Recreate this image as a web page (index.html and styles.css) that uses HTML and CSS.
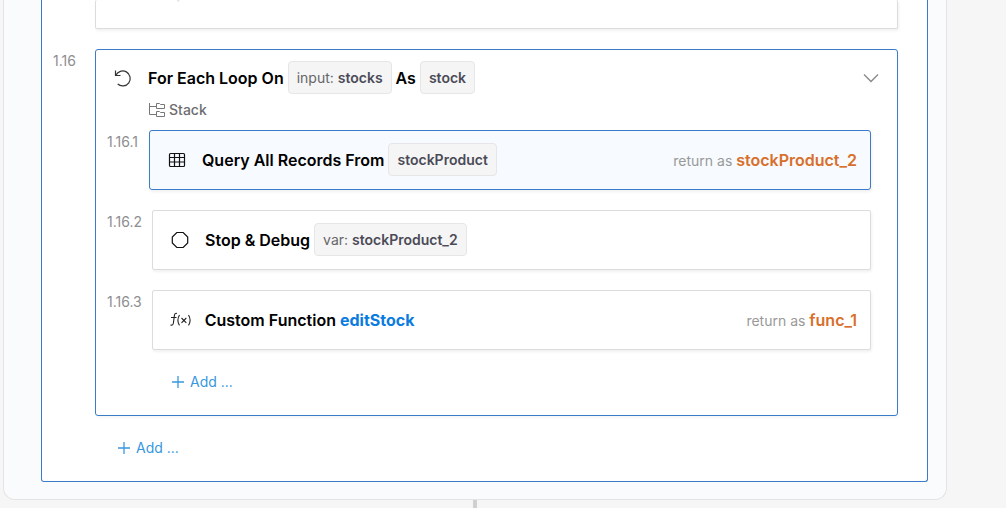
FILE: index.html
```
<!DOCTYPE html>
<html lang="en">
    <head>
        <meta charset="UTF-8" />
        <meta name="viewport" content="width=device-width,initial-scale=1" />
        <title>Function Stack</title>
        <link rel="stylesheet" href="styles.css">
    </head>
    <body>
        <main class="panel">
            <section class="group group-outer">
                <div class="step">
                    <span class="step-no"></span>
                    <div class="card card-prev">
                        <svg class="icon-tail" width="24" height="2" viewBox="0 0 24 2">
                            <path d="M11.5 0h2M11.5 1h1" stroke="#ccc" />
                        </svg>
                    </div>
                </div>
                <div class="step">
                    <span class="step-no">1.16</span>
                    <section class="group group-loop">
                        <header class="loop-head">
                            <svg class="icon" width="24" height="24" viewBox="0 0 24 24" fill="none" stroke="#333" stroke-width="1.2">
                                <path d="M4.5 4.5v5h5M4.8 9.5A7.5 7.5 0 1 1 6.7 18" />
                            </svg>
                            <h2 class="title">For Each Loop On</h2>
                            <span class="chip">input: <b>stocks</b></span>
                            <span class="title">As</span>
                            <span class="chip"><b>stock</b></span>
                            <button class="toggle" type="button" aria-label="Collapse loop">
                                <svg width="16" height="10" viewBox="0 0 16 10" fill="none" stroke="#888" stroke-width="1.3">
                                    <path d="M1 1.5l7 7 7-7" />
                                </svg>
                            </button>
                        </header>
                        <div class="stack-label">
                            <svg width="16" height="16" viewBox="0 0 16 16" fill="none" stroke="#777">
                                <path d="M.5 1v11.5H7M.5 4.5H7" />
                                <path d="M7.5 1.5h3l1 1h4v4h-8zM7.5 9.5h3l1 1h4v4h-8z" />
                            </svg>
                            Stack
                        </div>
                        <div class="step">
                            <span class="step-no">1.16.1</span>
                            <article class="card selected">
                                <svg class="icon" width="24" height="24" viewBox="0 0 24 24" fill="none" stroke="#111" stroke-width="1.2">
                                    <rect x="4.5" y="5.5" width="15" height="13" rx="1" />
                                    <path d="M4.5 9.5h15M4.5 14h15M9.5 5.5v13M14.5 5.5v13" />
                                </svg>
                                <h3 class="title">Query All Records From</h3>
                                <span class="chip"><b>stockProduct</b></span>
                                <span class="return">return as <b>stockProduct_2</b></span>
                            </article>
                        </div>
                        <div class="step">
                            <span class="step-no">1.16.2</span>
                            <article class="card">
                                <svg class="icon" width="24" height="24" viewBox="0 0 24 24" fill="none" stroke="#111" stroke-width="1.2">
                                    <path d="M8.8 4.5h6.4l4.5 4.5v6l-4.5 4.5H8.8L4.3 15V9z" />
                                </svg>
                                <h3 class="title">Stop &amp; Debug</h3>
                                <span class="chip">var: <b>stockProduct_2</b></span>
                            </article>
                        </div>
                        <div class="step">
                            <span class="step-no">1.16.3</span>
                            <article class="card">
                                <svg class="icon" width="24" height="24" viewBox="0 0 24 24" fill="none" stroke="#222" stroke-width="1.1">
                                    <path d="M9 5.5C7.4 4.9 6.6 5.7 6.4 7.5L5.4 15c-.2 1.8-1.2 2.5-2.9 2M3 9.5h5.5" />
                                    <path d="M11.5 7c-2 3.2-2 7.2 0 10.4M20.5 7c2 3.2 2 7.2 0 10.4M13.5 10l4.8 4.8M18.3 10l-4.8 4.8" />
                                </svg>
                                <h3 class="title">Custom Function <a class="fn-link" href="#editStock">editStock</a></h3>
                                <span class="return">return as <b>func_1</b></span>
                            </article>
                        </div>
                        <button class="add" type="button">
                            <svg width="12" height="12" viewBox="0 0 12 12" fill="none" stroke="currentColor" stroke-width="1.3">
                                <path d="M6 0v12M0 6h12" />
                            </svg>
                            Add ...
                        </button>
                    </section>
                </div>
                <button class="add" type="button">
                    <svg width="12" height="12" viewBox="0 0 12 12" fill="none" stroke="currentColor" stroke-width="1.3">
                        <path d="M6 0v12M0 6h12" />
                    </svg>
                    Add ...
                </button>
            </section>
        </main>
        <div class="connector"></div>
    </body>
</html>
```
FILE: styles.css
```
:root {
    --line: #dcdcde;
    --blue: #3a7cc8;
    --link: #0b7be0;
    --add: #3897e0;
    --orange: #d86f2b;
    --muted: #8e8e90;
}
* {
    box-sizing: border-box;
}
body {
    margin: 0;
    padding: 0 59px 0 3px;
    min-height: 100vh;
    display: flex;
    flex-direction: column;
    background: #f6f6f6;
    font-family: Inter, "Liberation Sans", sans-serif;
    font-size: 14px;
    line-height: 20px;
    color: #000;
}
button {
    padding: 0;
    border: none;
    background: none;
    font: inherit;
    cursor: pointer;
}
.panel {
    padding: 0 18px 17px 37px;
    border: 1px solid #e4e4e6;
    border-top: none;
    border-radius: 0 0 12px 12px;
    background: #f9fbfd;
}
.connector {
    flex: 1;
    width: 4px;
    min-height: 8px;
    align-self: center;
    background: #d0d0d3;
}
.group {
    display: flex;
    flex-direction: column;
    gap: 20px;
    border: 1px solid var(--blue);
    border-radius: 3px;
    background: #fff;
}
.group-outer {
    padding: 0 29px 21px 11px;
    border-top: none;
    border-radius: 0 0 3px 3px;
}
.group-loop {
    flex: 1;
    padding: 11px 26px 21px 11px;
    box-shadow: 1px 2px 3px rgba(0, 0, 0, 0.04);
}

/* numbered row */
.step {
    display: flex;
    gap: 10px;
}
.step-no {
    min-width: 32px;
    padding-top: 2px;
    color: var(--muted);
}
.card {
    flex: 1;
    display: flex;
    align-items: center;
    gap: 4px;
    min-height: 60px;
    padding: 0 13px 1px 15px;
    border: 1px solid var(--line);
    border-radius: 2px;
    background: #fff;
    box-shadow: 1px 2px 3px rgba(0, 0, 0, 0.06);
}
.card-prev {
    align-items: flex-start;
    min-height: 29px;
    padding-left: 70px;
    border-top: none;
}
.selected {
    border-color: var(--blue);
    border-radius: 3px;
    background: #f7fafe;
}
.icon {
    flex: none;
    margin-right: 9px;
}
.title {
    margin: 0;
    font-size: 16px;
    font-weight: 600;
}
.chip {
    padding: 6px 8px 5px;
    border: 1px solid #e6e6e8;
    border-radius: 4px;
    background: #f5f5f6;
    color: #666;
}
.chip b {
    font-weight: 600;
    color: #4b4b57;
}
.return {
    margin-left: auto;
    padding-top: 1px;
    color: #999;
}
.return b {
    font-size: 16px;
    font-weight: 600;
    color: var(--orange);
}
.fn-link {
    font-weight: 700;
    color: var(--link);
    text-decoration: none;
}
.loop-head {
    display: flex;
    align-items: center;
    gap: 4px;
    padding-left: 4px;
}
.toggle {
    display: flex;
    margin-left: auto;
    margin-right: -8px;
}
.stack-label {
    display: flex;
    align-items: center;
    gap: 4px;
    margin: -14px 0 -10px 42px;
    font-weight: 500;
    color: #6d6d70;
}
.add {
    display: flex;
    align-items: center;
    align-self: flex-start;
    gap: 6px;
    height: 24px;
    margin-left: 65px;
    color: var(--add);
}
```
